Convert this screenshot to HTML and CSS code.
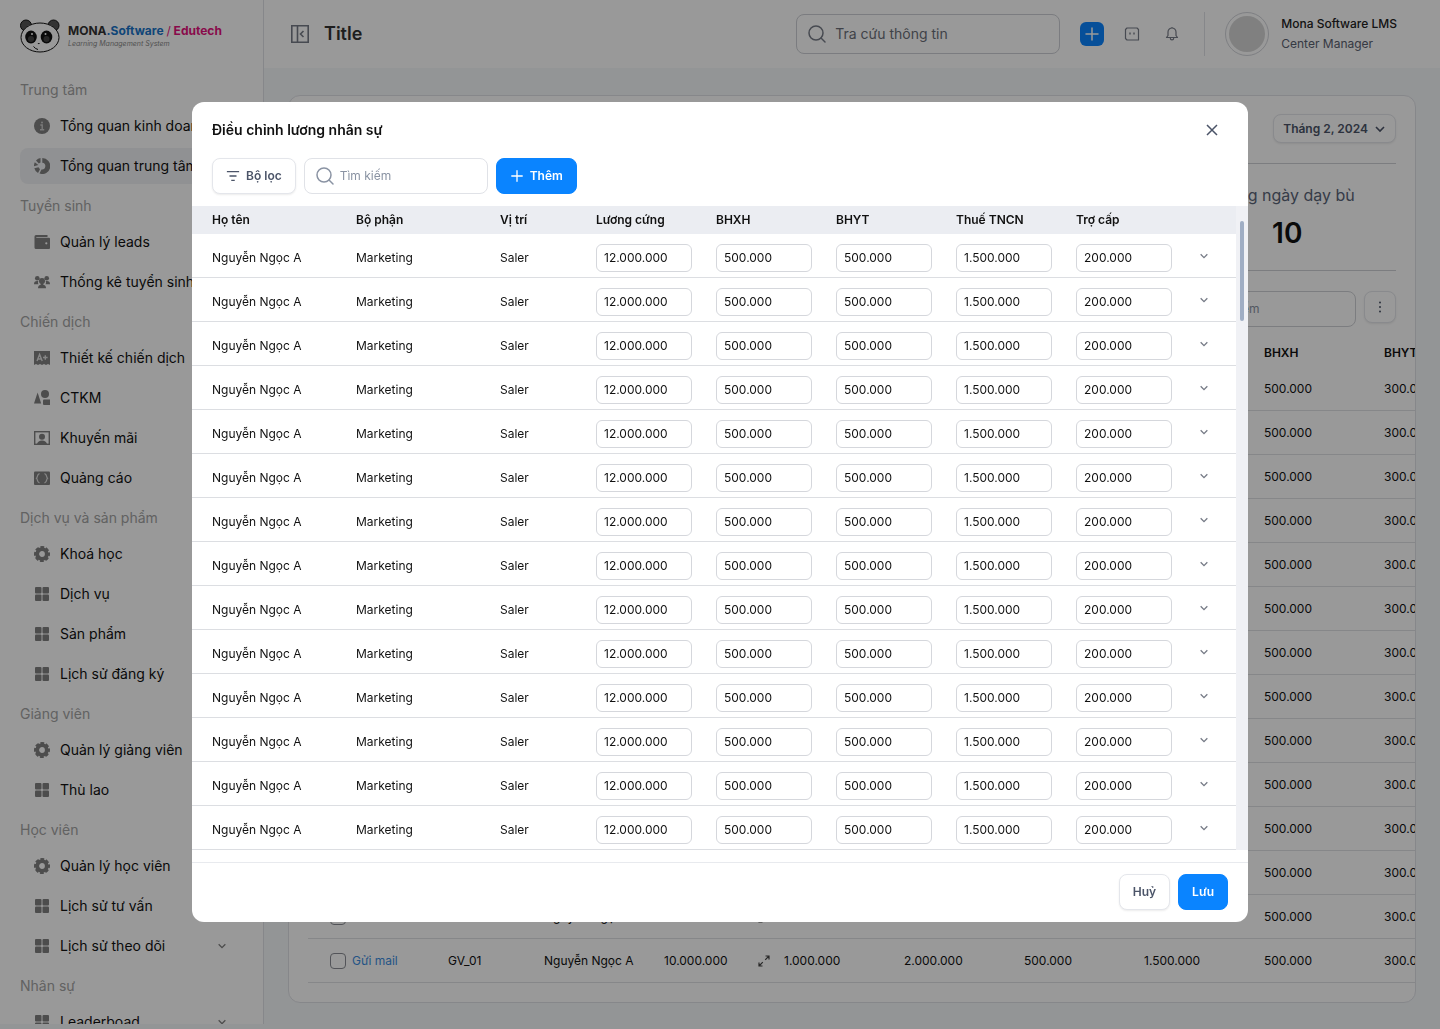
FILE: index.html
```html
<!DOCTYPE html>
<html lang="vi">
    <head>
        <meta charset="utf-8">
        <meta name="viewport" content="width=device-width, initial-scale=1">
        <link rel="stylesheet" href="styles.css">

        <title>Mona Software LMS</title>
    </head>

    <body>
        <!-- icons -->
        <svg class="sprite" aria-hidden="true">
            <symbol id="info" viewBox="0 0 16 16"><circle cx="8" cy="8" r="8" fill="currentColor"/><g fill="none" stroke="#fff" stroke-opacity=".6" stroke-width="1.4"><path d="M6.3 7h1.9v4.6M6 11.8h4.2"/></g><circle cx="8" cy="4.4" r="1" fill="#fff" fill-opacity=".6"/></symbol>
            <symbol id="pie" viewBox="0 0 16 16" fill="currentColor"><path d="M8.300 0A8 8 0 1 1 5.500 15.500L7.500 11.500A3.400 3.400 0 0 0 8.300 4.700z"/><path d="M6.500 0v4.500L4.800 5.400 2 2.500A8 8 0 0 1 6.500 0z"/><path d="M.8 4.200l3.600 2.700L0 8.200A8 8 0 0 1 .8 4.200z"/><path d="M.3 10.200l4.200-1 1.500 2L4 15A8 8 0 0 1 .3 10.200z"/></symbol>
            <symbol id="wallet" viewBox="0 0 16 16" fill="currentColor"><path d="M2 1h11.500v2H2.300v.8H15a1 1 0 0 1 1 1V14a1 1 0 0 1-1 1H2a1.500 1.500 0 0 1-1.500-1.500v-11A1.500 1.500 0 0 1 2 1zm10.300 7.200a1.100 1.100 0 1 0 0 2.200 1.100 1.100 0 0 0 0-2.200z" fill-rule="evenodd"/></symbol>
            <symbol id="people" viewBox="0 0 18 16" fill="currentColor"><circle cx="3.700" cy="3.800" r="2.600"/><circle cx="14.300" cy="3.800" r="2.600"/><path d="M0 10.500Q0 7 3.500 7h1.300Q4 9 5 10.500zM18 10.500Q18 7 14.500 7h-1.300Q14 9 13 10.500z"/><circle cx="9" cy="6.800" r="3.400"/><path d="M4.600 15v-1.500Q5 11.500 7.500 11V9h3v2q2.500.5 2.900 2.500V15z"/></symbol>
            <symbol id="grade" viewBox="0 0 16 16"><path d="M0 1h16v14l-2-1-2 1-2-1-2 1-2-1-2 1-2-1-2 1z" fill="currentColor"/><path d="M3 11l2.600-6.500L8.200 11M4 9h3.300M9 7.500h4.600M11.300 5.200v4.600" fill="none" stroke="#fff" stroke-opacity=".75" stroke-width="1.400"/></symbol>
            <symbol id="shapes" viewBox="0 0 16 16" fill="currentColor"><path d="M3.600 2.500L7.200 13.500H0z"/><circle cx="11" cy="4" r="4"/><rect x="9" y="9.500" width="7.500" height="5.500" rx="1"/></symbol>
            <symbol id="portrait" viewBox="0 0 16 16"><rect x=".7" y="1.700" width="14.600" height="12.600" fill="none" stroke="currentColor" stroke-width="1.400"/><circle cx="8" cy="6.800" r="3" fill="currentColor"/><path d="M3 14q1-3.500 5-3.500t5 3.500z" fill="currentColor"/></symbol>
            <symbol id="ads" viewBox="0 0 16 16"><rect y="1.500" width="16" height="13.500" rx="1" fill="currentColor"/><path d="M5.500 3.500C2.500 5 4 7 2.500 8.200 4 9.500 2.500 11.500 5.500 13M10.500 3.500c3 1.500 1.500 3.500 3 4.700-1.500 1.300 0 3.300-3 4.800" fill="none" stroke="#fff" stroke-opacity=".75" stroke-width="1.200"/></symbol>
            <symbol id="gear" viewBox="0 0 16 16"><g fill="none" stroke="currentColor"><circle cx="8" cy="8" r="4.800" stroke-width="3.800"/><circle cx="8" cy="8" r="6.900" stroke-width="2.200" stroke-dasharray="3.700 1.720" stroke-dashoffset="1.800"/></g></symbol>
            <symbol id="grid" viewBox="0 0 16 16" fill="currentColor"><rect x="1" y="1" width="6.500" height="6.500" rx="1"/><rect x="8.500" y="1" width="6.500" height="6.500" rx="1"/><rect x="1" y="8.500" width="6.500" height="6.500" rx="1"/><rect x="8.500" y="8.500" width="6.500" height="6.500" rx="1"/></symbol>
            <symbol id="chevron" viewBox="0 0 12 12"><path d="M2 4l4 4 4-4" fill="none" stroke="currentColor" stroke-width="1.600"/></symbol>
            <symbol id="collapse" viewBox="0 0 20 20"><path d="M1.800 1.800h16.400v16.400H1.800zM7.500 2v16M13.500 7l-3 3 3 3" fill="none" stroke="currentColor" stroke-width="1.600"/></symbol>
            <symbol id="search" viewBox="0 0 20 20"><circle cx="9" cy="9" r="7" fill="none" stroke="currentColor" stroke-width="1.500"/><path d="M14 14l4 4" stroke="currentColor" stroke-width="1.500" stroke-linecap="round"/></symbol>
            <symbol id="plus" viewBox="0 0 16 16"><path d="M8 2v12M2 8h12" stroke="currentColor" stroke-width="1.500" stroke-linecap="round"/></symbol>
            <symbol id="chat" viewBox="0 0 16 16"><path d="M3 2h10l1.500 1.500V14H3L1.500 12.500V3.500z" fill="none" stroke="currentColor" stroke-width="1.200" stroke-linejoin="round"/><path d="M6 6.500v2M10 6.500v2" stroke="currentColor" stroke-width="1.400"/></symbol>
            <symbol id="bell" viewBox="0 0 16 16"><path d="M2.500 11.500h11L12 9.500V6a4 4 0 0 0-8 0v3.500zM8 2V1M6.300 12c0 2.600 3.400 2.600 3.400 0" fill="none" stroke="currentColor" stroke-width="1.200" stroke-linejoin="round"/></symbol>
            <symbol id="filter" viewBox="0 0 16 16"><path d="M1 3h14M4 8h8M6 13h4" stroke="currentColor" stroke-width="1.700"/></symbol>
            <symbol id="close" viewBox="0 0 16 16"><path d="M3 3l10 10M13 3L3 13" stroke="currentColor" stroke-width="1.500"/></symbol>
            <symbol id="dots" viewBox="0 0 16 16" fill="currentColor"><circle cx="8" cy="3.500" r="1"/><circle cx="8" cy="8" r="1"/><circle cx="8" cy="12.500" r="1"/></symbol>
            <symbol id="expand" viewBox="0 0 12 12"><path d="M7.500 1H11v3.500M11 1L7.200 4.800M4.500 11H1V7.500M1 11l3.800-3.800" fill="none" stroke="currentColor" stroke-width="1.200"/></symbol>
        </svg>

        <div class="app">
            <aside class="sidebar">
                <a class="logo" href="#">
                    <svg class="panda" viewBox="0 0 40 34" aria-hidden="true">
                        <circle cx="6" cy="6.500" r="5.500" fill="#555" stroke="#111"/>
                        <circle cx="33.500" cy="6.500" r="5.500" fill="#555" stroke="#111"/>
                        <ellipse cx="20" cy="18.500" rx="19" ry="14.500" fill="#fff" stroke="#111"/>
                        <ellipse cx="11" cy="18" rx="5.800" ry="6.500" fill="#111"/>
                        <ellipse cx="26.500" cy="18" rx="5.800" ry="6.500" fill="#111"/>
                        <circle cx="11" cy="20" r="3" fill="#444"/>
                        <circle cx="26.500" cy="20" r="3" fill="#444"/>
                        <circle cx="12" cy="15" r="1" fill="#fff"/>
                        <circle cx="25.500" cy="15" r="1" fill="#fff"/>
                        <path d="M17.500 24h2.500l-1.200 1.300z" fill="#111"/>
                        <path d="M13.500 27.500q2 2.500 4.500 3" fill="none" stroke="#111"/>
                    </svg>
                    <span class="logo-text">
                        <b>MONA<span class="blue">.Software</span> <span class="pink"><span class="slash">/</span> Edutech</span></b>
                        <i>Learning Management System</i>
                    </span>
                </a>
                <nav class="menu" id="menu"></nav>
            </aside>

            <div class="content">
                <header class="topbar">
                    <button class="icon-button" aria-label="Thu gọn"><svg class="icon-20"><use href="#collapse"/></svg></button>
                    <h1>Title</h1>
                    <label class="search search-top">
                        <svg class="icon-20"><use href="#search"/></svg>
                        <input type="text" placeholder="Tra cứu thông tin" aria-label="Tra cứu thông tin">
                    </label>
                    <div class="actions">
                        <button class="icon-button add" aria-label="Thêm mới"><svg class="icon-16"><use href="#plus"/></svg></button>
                        <button class="icon-button" aria-label="Tin nhắn"><svg class="icon-16"><use href="#chat"/></svg></button>
                        <button class="icon-button" aria-label="Thông báo"><svg class="icon-16"><use href="#bell"/></svg></button>
                    </div>
                    <div class="user">
                        <span class="avatar"></span>
                        <div>
                            <p class="user-name">Mona Software LMS</p>
                            <p>Center Manager</p>
                        </div>
                    </div>
                </header>

                <main class="card">
                    <div class="card-head">
                        <button class="button month">Tháng 2, 2024 <svg class="icon-12"><use href="#chevron"/></svg></button>
                    </div>
                    <div class="stats">
                        <div class="stat">
                            <p>Tổng ngày dạy bù</p>
                            <strong>10</strong>
                        </div>
                    </div>
                    <div class="card-tools">
                        <label class="search search-card">
                            <svg class="icon-20"><use href="#search"/></svg>
                            <input type="text" placeholder="Tìm kiếm" aria-label="Tìm kiếm giáo viên">
                        </label>
                        <button class="button more" aria-label="Thêm tuỳ chọn"><svg class="icon-16"><use href="#dots"/></svg></button>
                    </div>
                    <div class="card-table">
                        <table class="salary">
                            <colgroup>
                                <col class="w-mail"><col class="w-96"><col class="w-120"><col class="w-120"><col class="w-120"><col class="w-120"><col class="w-120"><col class="w-120"><col class="w-120"><col class="w-120">
                            </colgroup>
                            <thead>
                                <tr>
                                    <th></th><th>Mã</th><th>Họ tên</th><th>Lương cứng</th><th>Thưởng</th><th>Phụ cấp</th><th>Trợ cấp</th><th>Thuế TNCN</th><th>BHXH</th><th>BHYT</th>
                                </tr>
                            </thead>
                            <tbody id="salary"></tbody>
                        </table>
                    </div>
                </main>
            </div>
        </div>

        <div class="overlay">
            <div class="modal" role="dialog" aria-labelledby="modal-title">
                <div class="modal-head">
                    <h2 id="modal-title">Điều chỉnh lương nhân sự</h2>
                    <button class="icon-button close" aria-label="Đóng"><svg class="icon-16"><use href="#close"/></svg></button>
                </div>
                <div class="modal-tools">
                    <button class="button"><svg class="icon-14"><use href="#filter"/></svg> Bộ lọc</button>
                    <label class="search search-modal">
                        <svg class="icon-20"><use href="#search"/></svg>
                        <input type="text" placeholder="Tìm kiếm" aria-label="Tìm kiếm nhân sự">
                    </label>
                    <button class="button primary"><svg class="icon-14"><use href="#plus"/></svg> Thêm</button>
                </div>
                <div class="modal-body">
                    <table class="staff">
                        <colgroup>
                            <col class="w-name"><col class="w-144"><col class="w-96"><col class="w-120"><col class="w-120"><col class="w-120"><col class="w-120"><col class="w-120"><col class="w-48">
                        </colgroup>
                        <thead>
                            <tr>
                                <th>Họ tên</th><th>Bộ phận</th><th>Vị trí</th><th>Lương cứng</th><th>BHXH</th><th>BHYT</th><th>Thuế TNCN</th><th>Trợ cấp</th><th></th>
                            </tr>
                        </thead>
                        <tbody id="staff"></tbody>
                    </table>
                    <div class="track"><div class="thumb"></div></div>
                </div>
                <div class="modal-foot">
                    <button class="button">Huỷ</button>
                    <button class="button primary">Lưu</button>
                </div>
            </div>
        </div>

        <script src="script.js"></script>
    </body>
</html>
```

FILE: styles.css
```css
*{
    box-sizing: border-box;
}

body{
    margin: 0;
    font-family: Inter, "Noto Sans", sans-serif;
    font-size: 12px;
    line-height: 20px;
    color: #111;
    background-color: #f6f8fb;
}

h1, h2, p{
    margin: 0;
}

a{
    color: inherit;
    text-decoration: none;
}

button, input{
    font-family: inherit;
    font-size: inherit;
    color: inherit;
}

button{
    cursor: pointer;
}

.sprite{
    display: none;
}

.icon-10{
    width: 10px;
    height: 10px;
}

.icon-12{
    width: 12px;
    height: 12px;
}

.icon-14{
    width: 14px;
    height: 14px;
}

.icon-16{
    width: 16px;
    height: 16px;
}

.icon-20{
    width: 20px;
    height: 20px;
}

svg{
    flex-shrink: 0;
}

.app{
    display: flex;
    height: 100vh;
    overflow: hidden;
}

/* sidebar */
.sidebar{
    flex: 0 0 264px;
    margin-bottom: 5px;
    padding: 16px 19px 0 20px;
    border-right: 1px solid #e0e2e7;
    background-color: white;
    overflow: hidden;
}

.logo{
    display: flex;
    align-items: center;
    gap: 8px;
    height: 40px;
    margin-bottom: 16px;
}

.panda{
    width: 40px;
    height: 34px;
}

.logo-text{
    display: flex;
    flex-direction: column;
    white-space: nowrap;
}

.logo-text b{
    font-size: 12px;
    line-height: 16px;
    color: #333;
}

.logo-text i{
    font-size: 7px;
    line-height: 10px;
    color: #888;
}

.logo-text .blue{
    color: #1a74c8;
}

.logo-text .pink{
    color: #e5127d;
}

.logo-text .slash{
    font-weight: 400;
}

.menu{
    display: flex;
    flex-direction: column;
    gap: 4px;
    font-size: 14px;
}

.menu-title{
    padding-top: 4px;
    line-height: 28px;
    color: #a3a3a3;
}

.menu-item{
    display: flex;
    align-items: center;
    gap: 10px;
    height: 36px;
    padding: 0 17px 0 14px;
    border-radius: 8px;
    white-space: nowrap;
}

.menu-item.active{
    background-color: #f1f2f5;
}

.menu-item svg{
    color: #808080;
}

.menu-item .icon-10{
    margin-left: auto;
}

/* top bar */
.content{
    flex: 1;
    min-width: 0;
}

.topbar{
    display: flex;
    align-items: center;
    height: 68px;
    padding: 0 43px 0 26px;
    background-color: white;
}

.topbar h1{
    margin: 0 auto 0 14px;
    font-size: 18px;
    font-weight: 600;
    color: #333;
}

.icon-button{
    display: flex;
    padding: 0;
    border: none;
    background: none;
    color: #777c87;
}

.search{
    display: flex;
    align-items: center;
    gap: 5px;
    height: 36px;
    padding: 0 10px;
    border: 1px solid #e0e2e7;
    border-radius: 8px;
    background-color: white;
    color: #8a93a3;
}

.search input{
    flex: 1;
    min-width: 0;
    padding: 0 0 1px;
    border: none;
    outline: none;
    background: none;
}

.search input::placeholder{
    color: #8a93a3;
    opacity: 1;
}

.search-top{
    width: 264px;
    height: 40px;
    gap: 8px;
    margin-right: 20px;
    border-color: #cdcfd5;
    font-size: 14px;
    color: #777c87;
}

.search-top input::placeholder{
    color: #6b6f79;
}

.actions{
    display: flex;
    align-items: center;
    gap: 16px;
    padding-right: 20px;
}

.actions .icon-button{
    padding: 4px;
    border-radius: 6px;
}

.actions .add{
    background-color: #0a84ff;
    color: white;
}

.user{
    display: flex;
    align-items: center;
    gap: 12px;
    height: 44px;
    padding-left: 20px;
    border-left: 1px solid #e0e2e7;
    white-space: nowrap;
    color: #5a6170;
}

.user-name{
    font-weight: 500;
    color: #222;
}

.avatar{
    width: 44px;
    height: 44px;
    padding: 3px;
    border: 1px solid #d2d4da;
    border-radius: 50%;
    background: #d6d6d6 content-box;
}

/* card */
.card{
    margin: 27px 24px 0 24px;
    padding: 18px 0 19px 19px;
    border: 1px solid #e0e2e7;
    border-radius: 12px;
    background-color: white;
    overflow: hidden;
}

.card-head{
    display: flex;
    justify-content: flex-end;
    margin-right: 19px;
    padding-bottom: 20px;
    border-bottom: 1px solid #cfd1d6;
}

.button{
    display: flex;
    align-items: center;
    gap: 6px;
    height: 36px;
    padding: 0 13px 1px;
    border: 1px solid #e4e6eb;
    border-radius: 8px;
    background-color: white;
    box-shadow: 0 1px 2px rgba(0, 0, 0, 0.08);
    font-weight: 600;
    color: #4b5468;
    white-space: nowrap;
}

.button.primary{
    border-color: #0a84ff;
    background-color: #0a84ff;
    box-shadow: none;
    color: white;
}

.button.month{
    height: 29px;
    padding: 0 9px;
}

.button.more{
    height: 32px;
    padding: 0 7px;
}

.stats{
    display: flex;
    justify-content: flex-end;
    margin-right: 19px;
    border-bottom: 1px solid #cfd1d6;
}

.stat{
    width: 20%;
    padding: 19px 0;
    text-align: center;
}

.stat p{
    font-size: 16px;
    line-height: 24px;
    color: #5a6478;
}

.stat strong{
    display: block;
    padding-top: 8px;
    font-size: 28px;
    font-weight: 600;
    line-height: 36px;
}

.card-tools{
    display: flex;
    justify-content: flex-end;
    gap: 8px;
    margin: 20px 19px 12px 0;
}

.search-card{
    width: 184px;
    border-color: #cfd1d6;
}

table{
    border-collapse: separate;
    border-spacing: 0;
    table-layout: fixed;
}

th{
    height: 28px;
    padding: 0;
    font-weight: 600;
    text-align: left;
}

td{
    padding: 0;
    white-space: nowrap;
}

.card-table{
    overflow: hidden;
}

.salary{
    width: 1196px;
}

.salary td{
    height: 44px;
    border-bottom: 1px solid #dfe1e5;
}

.mail{
    display: flex;
    align-items: center;
    gap: 6px;
    padding-left: 22px;
}

.mail a{
    color: #3c8de0;
}

.mail input{
    appearance: none;
    width: 16px;
    height: 16px;
    margin: 0;
    border: 1px solid #8a8d94;
    border-radius: 4px;
}

.expand{
    display: flex;
    align-items: center;
    justify-content: space-between;
    padding-right: 14px;
}

.expand svg{
    color: #444;
}

.w-mail{
    width: 140px;
}

.w-120{
    width: 120px;
}

/* modal */
.overlay{
    position: fixed;
    inset: 0;
    display: flex;
    align-items: center;
    justify-content: center;
    padding-bottom: 5px;
    background-color: rgba(0, 0, 0, 0.4);
}

.modal{
    width: 1056px;
    max-width: 100%;
    border-radius: 12px;
    background-color: white;
    overflow: hidden;
}

.modal-head{
    display: flex;
    align-items: center;
    justify-content: space-between;
    height: 56px;
    padding: 0 28px 0 20px;
}

.modal-head h2{
    font-size: 14px;
    font-weight: 600;
}

.close{
    color: #4b5468;
}

.modal-tools{
    display: flex;
    gap: 8px;
    padding: 0 20px 12px;
}

.search-modal{
    width: 184px;
}

.modal-body{
    display: flex;
}

.staff{
    flex: 1;
    min-width: 0;
}

.staff th{
    padding: 0 8px;
    background-color: #ebedf2;
}

.staff td{
    padding: 10px 8px 5px;
    border-bottom: 1px solid #dcdee2;
}

.staff th:first-child, .staff td:first-child{
    padding-left: 20px;
}

.staff input{
    display: block;
    width: 96px;
    height: 28px;
    padding: 0 7px 1px;
    border: 1px solid #d5d7dc;
    border-radius: 6px;
    outline: none;
    background-color: white;
}

.staff .icon-button{
    padding: 0 3px 4px;
}

.w-name{
    width: 156px;
}

.w-144{
    width: 144px;
}

.w-96{
    width: 96px;
}

.w-48{
    width: 48px;
}

.track{
    flex: 0 0 12px;
    padding: 15px 4px;
    background-color: #f0f1f5;
}

.thumb{
    height: 100px;
    border-radius: 2px;
    background-color: #a0aec4;
}

.modal-foot{
    display: flex;
    justify-content: flex-end;
    gap: 8px;
    margin-top: 12px;
    padding: 11px 20px 12px;
    border-top: 1px solid #e8eaee;
}
```

FILE: script.js
```js
const ROWS = 14;

const menu = [
    ["Trung tâm", [["info", "Tổng quan kinh doanh"], ["pie", "Tổng quan trung tâm", "active"]]],
    ["Tuyển sinh", [["wallet", "Quản lý leads"], ["people", "Thống kê tuyển sinh"]]],
    ["Chiến dịch", [["grade", "Thiết kế chiến dịch"], ["shapes", "CTKM"], ["portrait", "Khuyến mãi"], ["ads", "Quảng cáo"]]],
    ["Dịch vụ và sản phẩm", [["gear", "Khoá học"], ["grid", "Dịch vụ"], ["grid", "Sản phẩm"], ["grid", "Lịch sử đăng ký"]]],
    ["Giảng viên", [["gear", "Quản lý giảng viên"], ["grid", "Thù lao"]]],
    ["Học viên", [["gear", "Quản lý học viên"], ["grid", "Lịch sử tư vấn"], ["grid", "Lịch sử theo dõi", "more"]]],
    ["Nhân sự", [["grid", "Leaderboad", "more"]]]
];

let menuHtml = "";
for(const [title, items] of menu)
{
    menuHtml += `<div class="menu-title">${title}</div>`;
    for(const [icon, label, state] of items)
    {
        const arrow = state == "more" ? `<svg class="icon-10"><use href="#chevron"/></svg>` : "";
        menuHtml += `<a href="#" class="menu-item ${state == "active" ? "active" : ""}"><svg class="icon-16"><use href="#${icon}"/></svg>${label}${arrow}</a>`;
    }
}
document.getElementById("menu").innerHTML = menuHtml;

const salaries = ["1.000.000", "2.000.000", "500.000", "1.500.000", "500.000", "300.000"];
document.getElementById("salary").innerHTML = `
    <tr>
        <td><div class="mail"><input type="checkbox" aria-label="Chọn Nguyễn Ngọc A"><a href="#">Gửi mail</a></div></td>
        <td>GV_01</td>
        <td>Nguyễn Ngọc A</td>
        <td><div class="expand">10.000.000 <svg class="icon-12"><use href="#expand"/></svg></div></td>
        ${salaries.map(s => `<td>${s}</td>`).join("")}
    </tr>`.repeat(ROWS);

const fields = [["Lương cứng", "12.000.000"], ["BHXH", "500.000"], ["BHYT", "500.000"], ["Thuế TNCN", "1.500.000"], ["Trợ cấp", "200.000"]];
document.getElementById("staff").innerHTML = `
    <tr>
        <td>Nguyễn Ngọc A</td>
        <td>Marketing</td>
        <td>Saler</td>
        ${fields.map(([name, value]) => `<td><input type="text" aria-label="${name}" value="${value}"></td>`).join("")}
        <td><button class="icon-button" aria-label="Chi tiết"><svg class="icon-10"><use href="#chevron"/></svg></button></td>
    </tr>`.repeat(ROWS);
```
